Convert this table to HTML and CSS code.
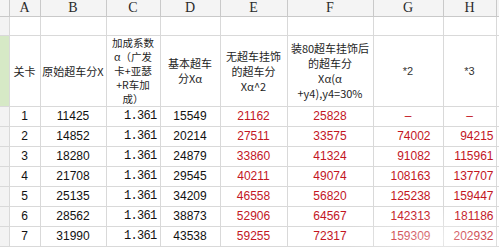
FILE: index.html
```html
<!DOCTYPE html>
<html>
<head>
<meta charset="utf-8">
<link rel="stylesheet" href="styles.css">
</head>
<body>
<div class="sheet">
<table class="grid">
  <colgroup>
    <col class="w-rh"><col class="w-a"><col class="w-b"><col class="w-c"><col class="w-d"><col class="w-e"><col class="w-f"><col class="w-g"><col class="w-h"><col class="w-i">
  </colgroup>
  <tr class="letters">
    <td class="rh"></td><td>A</td><td>B</td><td>C</td><td>D</td><td>E</td><td>F</td><td>G</td><td>H</td><td></td>
  </tr>
  <tr class="blank">
    <td class="rh"></td><td></td><td></td><td></td><td></td><td></td><td></td><td></td><td></td><td></td>
  </tr>
  <tr class="head">
    <td class="rh sel"></td>
    <td>关卡</td>
    <td>原始超车分X</td>
    <td class="tall">加成系数<br>α（广发<br>卡+亚瑟<br>+R车加<br>成）</td>
    <td class="mid">基本超车<br>分Xα</td>
    <td class="mid">无超车挂饰<br>的超车分<br>Xα^2</td>
    <td class="mid">装80超车挂饰后<br>的超车分<br>Xα(α<br>+y4),y4=30%</td>
    <td class="ast">*2</td>
    <td class="ast">*3</td>
    <td></td>
  </tr>
  <tr class="row"><td class="rh"></td><td class="n">1</td><td class="n">11425</td><td class="m">1.361</td><td class="n">15549</td><td class="r">21162</td><td class="r">25828</td><td class="r">–</td><td class="r">–</td><td></td></tr>
  <tr class="row"><td class="rh"></td><td class="n">2</td><td class="n">14852</td><td class="m">1.361</td><td class="n">20214</td><td class="r">27511</td><td class="r">33575</td><td class="r g">74002</td><td class="r h">94215</td><td></td></tr>
  <tr class="row"><td class="rh"></td><td class="n">3</td><td class="n">18280</td><td class="m">1.361</td><td class="n">24879</td><td class="r">33860</td><td class="r">41324</td><td class="r g">91082</td><td class="r h">115961</td><td></td></tr>
  <tr class="row"><td class="rh"></td><td class="n">4</td><td class="n">21708</td><td class="m">1.361</td><td class="n">29545</td><td class="r">40211</td><td class="r">49074</td><td class="r g">108163</td><td class="r h">137707</td><td></td></tr>
  <tr class="row"><td class="rh"></td><td class="n">5</td><td class="n">25135</td><td class="m">1.361</td><td class="n">34209</td><td class="r">46558</td><td class="r">56820</td><td class="r g">125238</td><td class="r h">159447</td><td></td></tr>
  <tr class="row"><td class="rh"></td><td class="n">6</td><td class="n">28562</td><td class="m">1.361</td><td class="n">38873</td><td class="r">52906</td><td class="r">64567</td><td class="r g">142313</td><td class="r h">181186</td><td></td></tr>
  <tr class="row"><td class="rh"></td><td class="n">7</td><td class="n">31990</td><td class="m">1.361</td><td class="n">43538</td><td class="r">59255</td><td class="r">72317</td><td class="r g">159309</td><td class="r h">202932</td><td></td></tr>
</table>
<div class="mark"></div>
</div>
</body>
</html>
```
FILE: styles.css
```css
html, body {
  margin: 0;
  padding: 0;
  background: #ffffff;
  overflow: hidden;
}
.sheet {
  position: relative;
  width: 499px;
  height: 247px;
  overflow: hidden;
}
.grid {
  border-collapse: collapse;
  table-layout: fixed;
  width: 526px;
  font-family: "Liberation Sans", "Noto Sans CJK SC", sans-serif;
  font-size: 12px;
  color: #1b1b1b;
}
.w-rh { width: 9px; }
.w-a { width: 31px; }
.w-b { width: 66px; }
.w-c { width: 54px; }
.w-d { width: 60px; }
.w-e { width: 67px; }
.w-f { width: 86px; }
.w-g { width: 70px; }
.w-h { width: 53px; }
.w-i { width: 30px; }
.grid td {
  border: 1px solid #d9d9d9;
  padding: 0;
  text-align: center;
  vertical-align: middle;
  overflow: hidden;
  white-space: nowrap;
}
.grid tr > td:first-child { border-left: none; }
.rh {
  background: #f3f3f3;
}
.rh.sel {
  background: #d6e9c6;
}
.letters td {
  height: 16px;
  background: #f4f4f4;
  border-top: none;
  border-color: #c9c9c9;
  font-family: "Liberation Serif", "DejaVu Serif", serif;
  font-size: 14px;
  color: #2a2a2a;
  line-height: 16px;
}
.blank td {
  height: 18px;
}
.head td {
  height: 69px;
  font-family: "Noto Sans CJK SC", sans-serif;
  font-size: 11px;
  line-height: 14.5px;
  color: #1e1e1e;
  white-space: nowrap;
}
.head td.tall {
  font-size: 10.5px;
  line-height: 14px;
}
.head td.mid {
  line-height: 15px;
}
.head td.ast {
  font-family: "Liberation Sans", sans-serif;
  font-size: 11px;
  color: #333;
}
.row td {
  height: 19px;
  line-height: 19px;
}
.row td.n {
  color: #111;
}
.row td.m {
  font-family: "Liberation Mono", monospace;
  font-size: 12px;
  letter-spacing: -0.7px;
  text-align: right;
  padding-right: 3px;
  color: #111;
}
.row td.r {
  color: #c3161f;
}
.row td.g {
  text-align: right;
  padding-right: 12px;
}
.row td.h {
  text-align: right;
  padding-right: 2px;
}
.mark {
  position: absolute;
  left: 340px;
  top: 210px;
  width: 190px;
  height: 56px;
  border-radius: 50%;
  background: radial-gradient(ellipse at center, rgba(255,255,255,0.45), rgba(255,255,255,0) 70%);
  pointer-events: none;
}
```
